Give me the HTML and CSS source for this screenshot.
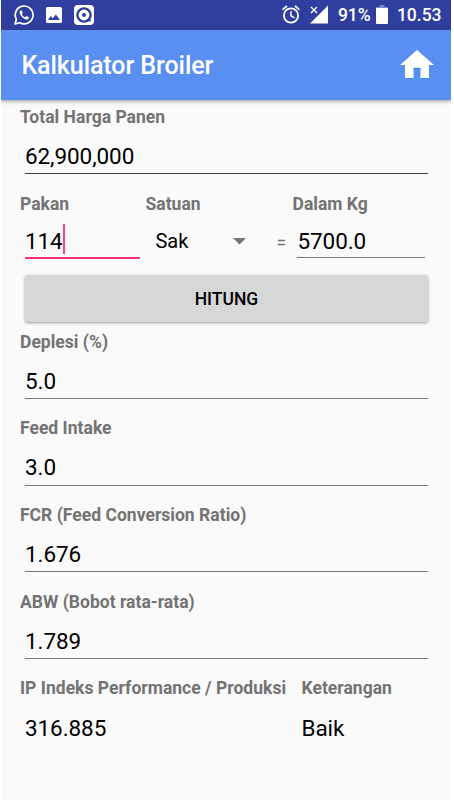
FILE: index.html
```html
<!DOCTYPE html>
<html lang="id">
<head>
<meta charset="utf-8">
<title>Kalkulator Broiler</title>
<link rel="stylesheet" href="styles.css">
</head>
<body>
<div class="screen">
  <div class="status">
    <svg class="ic-wa" width="20" height="20" viewBox="0 0 20 20"><path d="M1 19l1.4-4.7A8.9 8.9 0 1 1 5.8 17.700z" fill="none" stroke="#fff" stroke-width="1.7" stroke-linejoin="round"/><path d="M6.800 5.200c-1 .6-1.500 1.700-1.100 2.900 1.100 3.300 3.300 5.500 6.400 6.400 1.300.3 2.500-.4 2.800-1.700v-.6l-2.500-1.200-1.300 1.300c-1.500-.6-2.600-1.700-3.300-3.100l.9-1.200-1-2.500z" fill="#fff"/></svg>
    <svg class="ic-img" width="16" height="16" viewBox="0 0 16 16"><path fill="#fff" fill-rule="evenodd" d="M1.500 0h13A1.500 1.500 0 0 1 16 1.500v13a1.500 1.500 0 0 1-1.500 1.500h-13A1.500 1.500 0 0 1 0 14.500v-13A1.500 1.500 0 0 1 1.500 0zM2 13h12L9.900 7.500l-3.100 4L4.600 9z"/></svg>
    <svg class="ic-cam" width="20" height="20" viewBox="0 0 20 20"><rect width="20" height="20" rx="4" fill="#fff"/><circle cx="10" cy="10" r="6.600" fill="none" stroke="#303f9f" stroke-width="2.400"/><path d="M12 15.500h5" stroke="#303f9f" stroke-width="1.700"/><circle cx="10" cy="10" r="2" fill="#303f9f"/></svg>
    <span class="spacer"></span>
    <svg class="ic-alarm" width="18" height="19" viewBox="0 0 18 19"><g fill="none" stroke="#fff"><circle cx="9" cy="10.500" r="7.100" stroke-width="1.800"/><path d="M.6 4.600L5 1M17.400 4.600L13 1" stroke-width="1.800"/><path d="M9 6.200v4.700l3.500 2" stroke-width="1.500"/></g></svg>
    <svg class="ic-signal" width="18" height="19" viewBox="0 0 18 19"><path d="M18 .5V18.500H0z" fill="#fff"/><path d="M0 0h8.500L9 8l-4 4H0z" fill="#303f9f"/><path d="M1 2l6 6M7 2L1 8" stroke="#fff" stroke-width="1.400"/></svg>
    <span class="pct">91%</span>
    <svg class="ic-batt" width="12" height="19" viewBox="0 0 12 19"><path d="M3.500 0h5v2H12v3H0V2h3.500z" fill="#7d86c3"/><path d="M0 3h12v15a1 1 0 0 1-1 1H1a1 1 0 0 1-1-1z" fill="#fff"/></svg>
    <span class="clock">10.53</span>
  </div>
  <header class="bar">
    <h1>Kalkulator Broiler</h1>
    <svg width="34" height="29" viewBox="0 0 34 29"><path fill="#fff" d="M17 0l17 15h-5v14h-8.500V18h-7v11H5V15H0z"/><path d="M5 28.500h8.500M20.500 28.500H29M13.500 18.300h7" stroke="#1687ef" stroke-width=".9"/></svg>
  </header>
  <main>
    <section class="group">
      <div class="label">Total Harga Panen</div>
      <div class="field dark">62,900,000</div>
    </section>
    <section class="convert">
      <div class="col feed"><div class="label">Pakan</div><div class="field active">114<i class="caret"></i></div></div>
      <div class="col unit"><div class="label">Satuan</div><div class="select">Sak<svg width="13" height="7" viewBox="0 0 13 7"><path d="M0 0h13L6.500 6.500z" fill="#737373"/></svg></div></div>
      <div class="eq">=</div>
      <div class="col kg"><div class="label">Dalam Kg</div><div class="field">5700.0</div></div>
    </section>
    <button class="calc">HITUNG</button>
    <section class="group"><div class="label">Deplesi (%)</div><div class="field">5.0</div></section>
    <section class="group"><div class="label">Feed Intake</div><div class="field">3.0</div></section>
    <section class="group"><div class="label">FCR (Feed Conversion Ratio)</div><div class="field">1.676</div></section>
    <section class="group"><div class="label">ABW (Bobot rata-rata)</div><div class="field">1.789</div></section>
    <section class="result">
      <div class="col"><div class="label">IP Indeks Performance / Produksi</div><div class="value inset">316.885</div></div>
      <div class="col"><div class="label">Keterangan</div><div class="value">Baik</div></div>
    </section>
  </main>
</div>
</body>
</html>
```
FILE: styles.css
```css
* { box-sizing: border-box; }
body { margin: 0; background: #fff; font-family: Roboto, sans-serif; }
.screen { width: 450px; height: 800px; margin-left: 1.4px; background: #fafafa; overflow: hidden; }

.status { height: 29.5px; background: #303f9f; display: flex; align-items: center; padding: 0 9.5px 0 12.6px; color: #fff; font-size: 17.5px; font-weight: 500; line-height: 29px; }
.status svg { flex: none; }
.status span { padding-top: 2px; }
.ic-img { margin-left: 12px; }
.ic-cam { margin-left: 12px; }
.spacer { flex: 1; }
.ic-signal { margin-left: 10px; }
.pct { margin-left: 10px; width: 33px; white-space: nowrap; }
.ic-batt { margin-left: 5px; }
.clock { margin-left: 9px; width: 45px; white-space: nowrap; }

.bar { height: 70px; background: #5a8ff2; display: flex; align-items: center; justify-content: space-between; padding: 0 17.6px 0 20px; box-shadow: 0 1px 4px rgba(60, 60, 40, .55); }
.bar h1 { margin: 3px 0 0; color: #fff; font-size: 25px; font-weight: 500; line-height: 30px; letter-spacing: -.07px; }

main { padding: 5px 18.5px 0 18.6px; }
.group { height: 86.6px; }
.label { height: 24px; line-height: 24px; font-size: 17.5px; font-weight: 700; color: #737373; white-space: nowrap; letter-spacing: .02px; }
.field { height: 45.2px; margin: 0 5px; line-height: 55px; font-size: 22.5px; letter-spacing: -.08px; color: #000; border-bottom: 1px solid #777; white-space: nowrap; }
.field.dark { height: 45px; line-height: 54px; border-color: #3f3f3f; }

.convert { height: 84.1px; padding-top: .6px; display: flex; }
.convert .field { height: 42.2px; line-height: 50px; }
.convert .feed { width: 125.5px; }
.convert .field.active { height: 43.2px; margin-right: 5.7px; border-bottom: 2px solid #ff2f7c; display: flex; }
.caret { width: 2px; height: 30px; margin-top: 8px; background: #ff4081; }
.unit { width: 131px; }
.select { display: flex; align-items: center; justify-content: space-between; height: 50px; padding: 1px 30px 0 10px; font-size: 20px; color: #000; }
.eq { width: 16px; padding-top: 39px; font-size: 17.5px; line-height: 24px; color: #737373; }
.kg { width: 138px; }

.calc { display: block; width: 403px; height: 46.5px; margin: 0 5px 8.1px; border: 0; border-radius: 3px; background: #d6d8d7; box-shadow: 0 1px 3px rgba(0, 0, 0, .4); font: 500 17.5px/47px Roboto, sans-serif; color: #000; }

.result { display: grid; grid-template-columns: 281.5px 1fr; }
.value { font-size: 22.5px; line-height: 56px; letter-spacing: -.08px; }
.value.inset { padding-left: 5px; }
```
